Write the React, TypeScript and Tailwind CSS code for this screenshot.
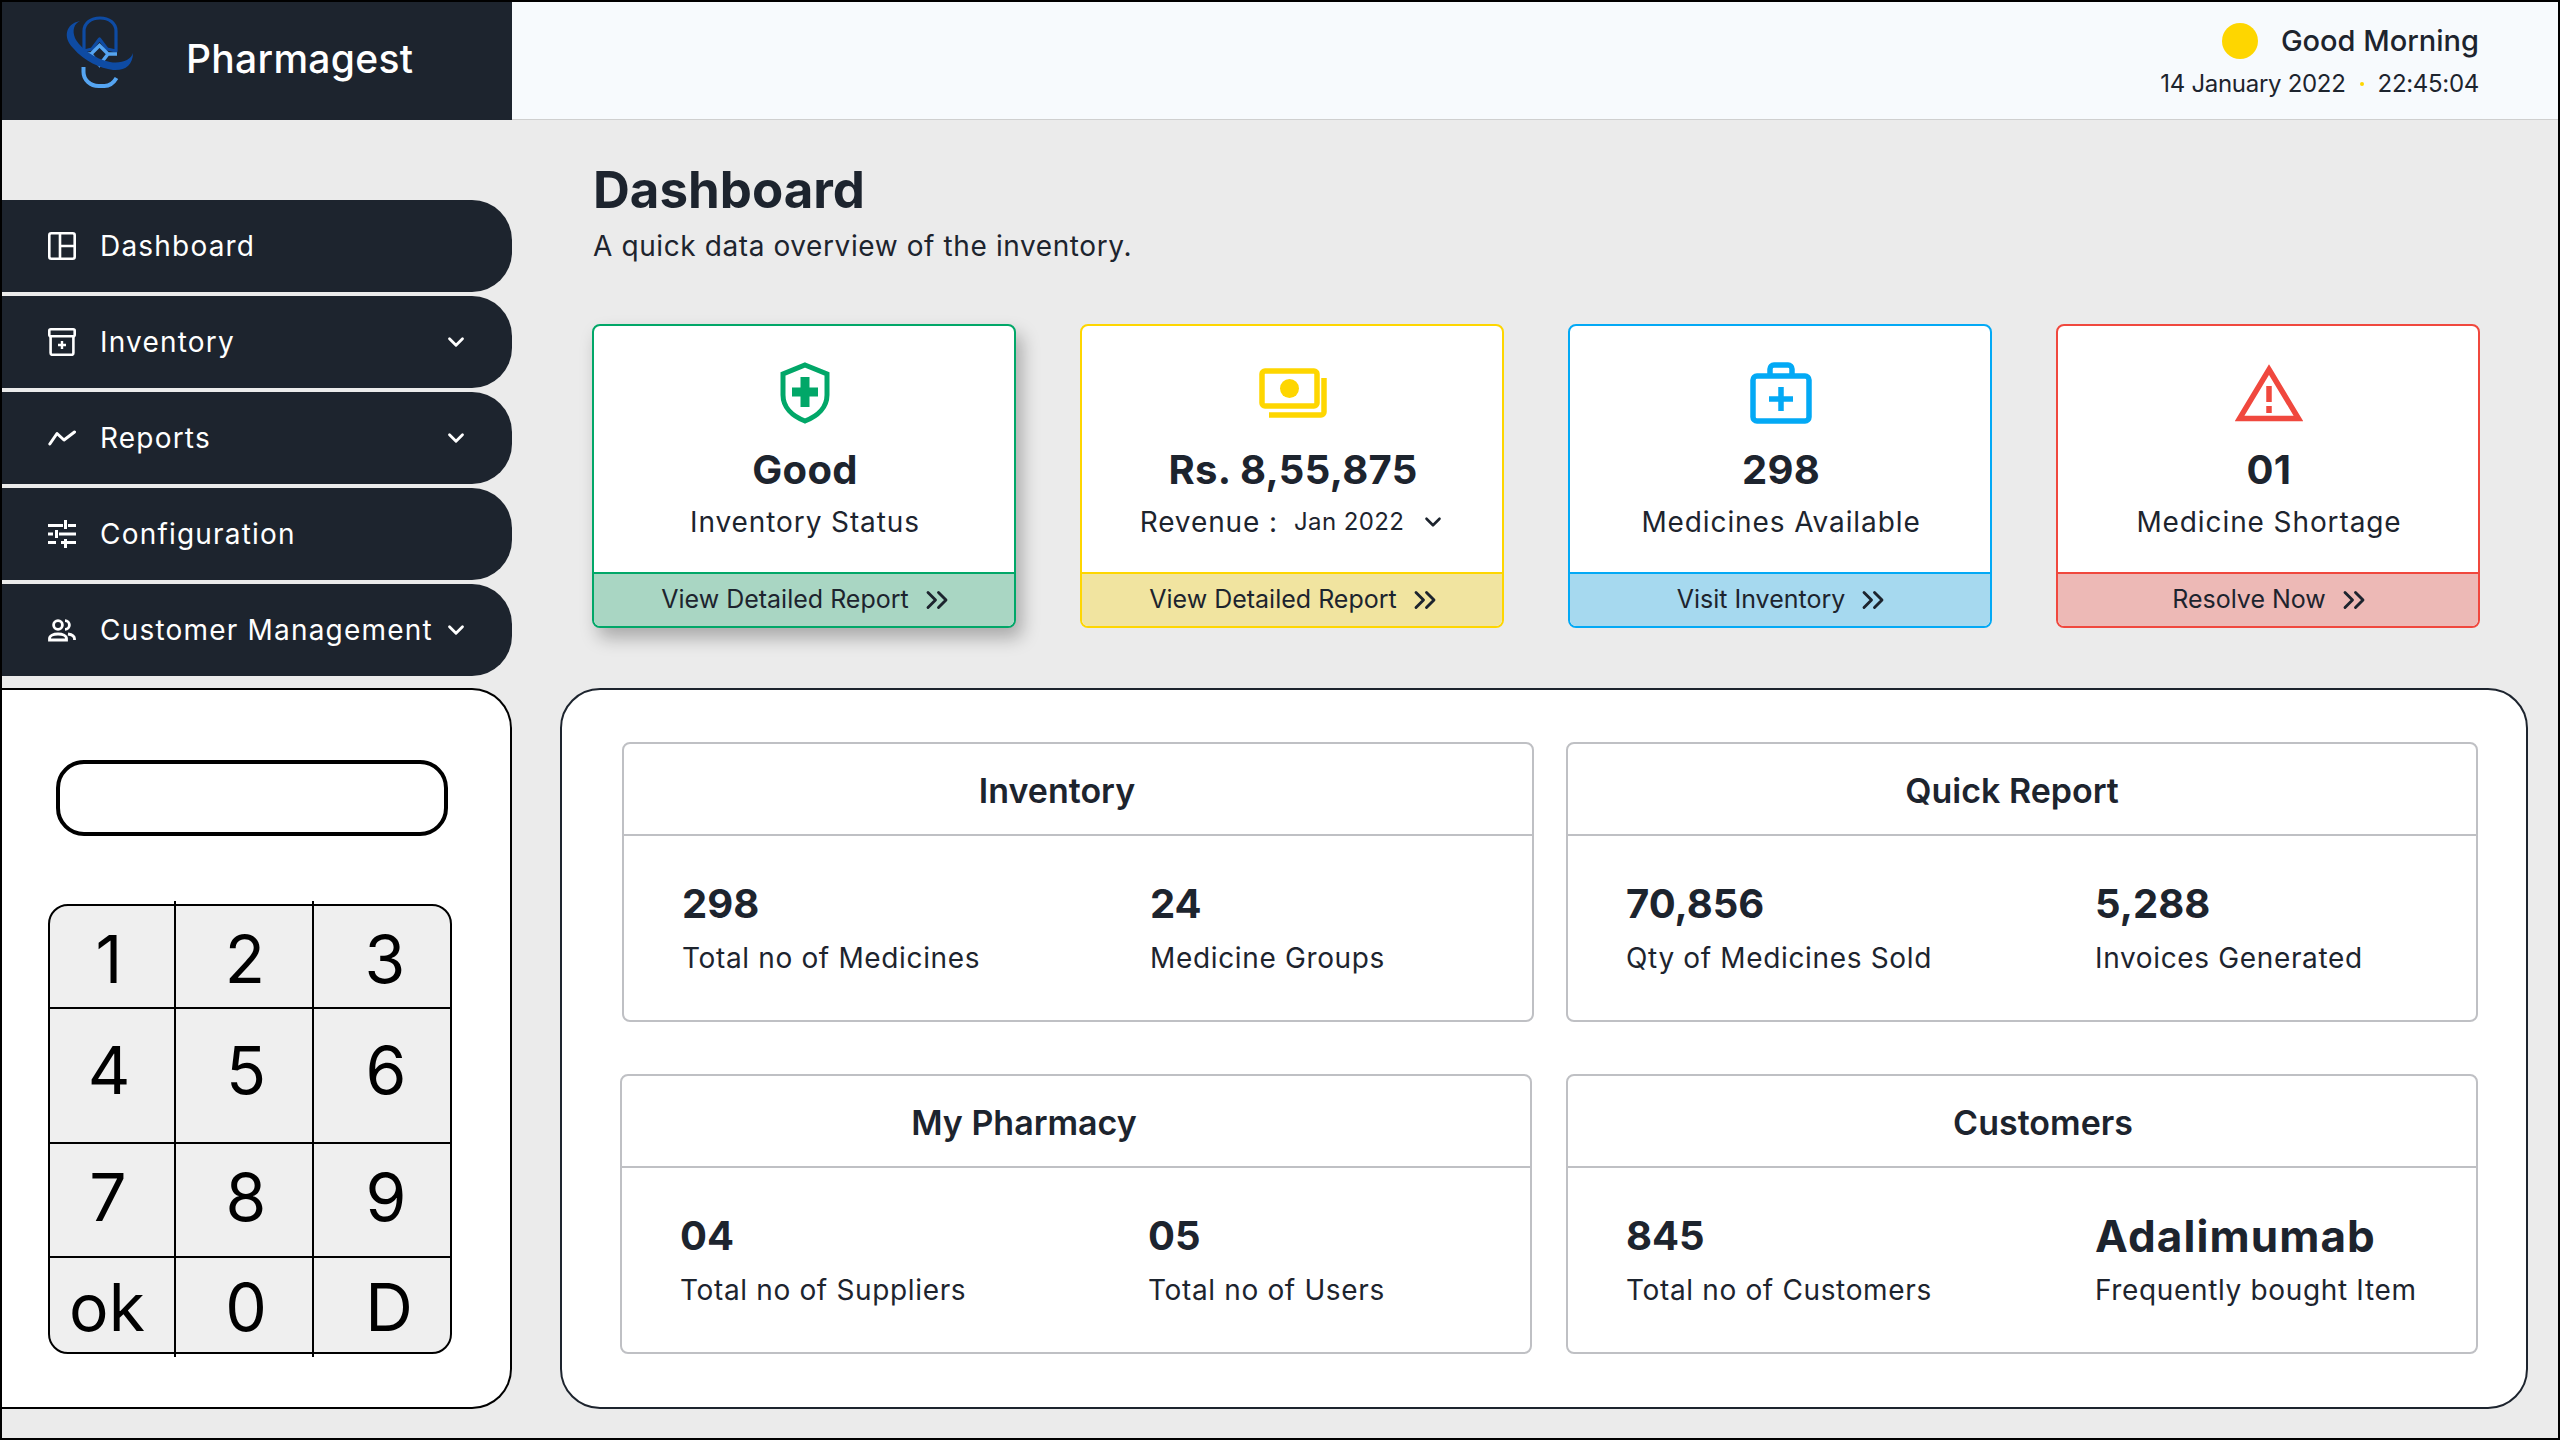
import React from 'react';
import { ChevronDown, ChevronsRight } from 'lucide-react';

const DashIcon = () => (
  <svg width="28" height="28" viewBox="0 0 28 28" fill="none" stroke="white" strokeWidth="2.6">
    <rect x="1.3" y="1.3" width="25.4" height="25.4" rx="2" />
    <path d="M12 1v26M12 14h15" />
  </svg>
);

const BoxIcon = () => (
  <svg width="28" height="28" viewBox="0 0 28 28" fill="none" stroke="white" strokeWidth="2.6">
    <rect x="1.3" y="1.3" width="25.4" height="7" rx="1.5" />
    <path d="M2.6 8v17a1.8 1.8 0 0 0 1.8 1.800h19.200a1.800 1.800 0 0 0 1.800-1.800V8" />
    <path d="M14 13v8M10 17h8" strokeWidth="2.4" />
  </svg>
);

const TrendIcon = () => (
  <svg width="28" height="28" viewBox="0 0 28 28" fill="none" stroke="white" strokeWidth="3" strokeLinecap="round" strokeLinejoin="round">
    <path d="M1.800 20 9 9.500l7 6.500L26.500 8" />
  </svg>
);

const TuneIcon = () => (
  <svg width="28" height="28" viewBox="0 0 28 28" fill="none" stroke="white" strokeWidth="3">
    <path d="M0 5.500h15M20 5.500h8M17.500 0v9" />
    <path d="M0 14h5M11 14h17M8.500 10v8" />
    <path d="M0 22.500h8M13 22.500h15M17.500 19v9" />
  </svg>
);

const PeopleIcon = () => (
  <svg width="28" height="28" viewBox="0 0 28 28" fill="none" stroke="white" strokeWidth="2.800">
    <circle cx="10" cy="9" r="4.400" />
    <path d="M1.500 24v-1.500c0-2.800 3.800-4.500 8.500-4.500s8.500 1.700 8.500 4.500V24z" />
    <path d="M17 4.600a4.400 4.400 0 0 1 0 8.800M20 18c3.600.6 6.500 2.200 6.500 4.700V24" />
  </svg>
);

const ShieldIcon = () => (
  <svg width="50" height="62" viewBox="0 0 50 62" fill="none">
    <path d="M25 3 47 12v21c0 12-9 21-22 26C12 54 3 45 3 33V12z" stroke="#01a768" strokeWidth="5" />
    <path d="M20.500 15h9v10.500H38v9h-8.500V45h-9V34.500H12v-9h8.500z" fill="#01a768" />
  </svg>
);

const MoneyIcon = () => (
  <svg width="68" height="50" viewBox="0 0 68 50" fill="none">
    <rect x="3" y="3" width="55" height="35" rx="3" stroke="#fed600" strokeWidth="5.500" />
    <circle cx="30.500" cy="20.500" r="9.500" fill="#fed600" />
    <path d="M65 10v34a3 3 0 0 1-3 3H10" stroke="#fed600" strokeWidth="5.500" />
  </svg>
);

const BagIcon = () => (
  <svg width="62" height="62" viewBox="0 0 62 62" fill="none">
    <path d="M20 13V7a4 4 0 0 1 4-4h14a4 4 0 0 1 4 4v6" stroke="#03a9f5" strokeWidth="5.500" />
    <rect x="3" y="14" width="56" height="45" rx="4" stroke="#03a9f5" strokeWidth="5.500" />
    <path d="M31 25v24M19 37h24" stroke="#03a9f5" strokeWidth="5.500" />
  </svg>
);

const WarnIcon = () => (
  <svg width="68" height="58" viewBox="0 0 68 58" fill="none">
    <path d="M34 5.500 63.500 54.500h-59z" stroke="#f0483e" strokeWidth="5.500" />
    <path d="M34 22v16M34 42v7" stroke="#f0483e" strokeWidth="5.500" />
  </svg>
);

const Logo = () => (
  <svg width="90" height="85" viewBox="0 0 90 85" fill="none" className="mb-[17px]">
    <path d="M29 41V21C29 13 36 8 45 8s16 5 16 13v20l-9-2-7.500-10L37 39z" stroke="#0e4ba3" strokeWidth="3.200" strokeLinejoin="round" />
    <path d="M27.500 44H36l8.500-8.500L53 44h9M36 44l8.500 11L53 44" stroke="#55a5f2" strokeWidth="3.400" />
    <path d="M28.500 57v5c0 8 7 14 15 14h6c5 0 9-3 12-8" stroke="#55a5f2" strokeWidth="4" />
    <path d="M25 11C10 14 8 28 18 38c12 14 27 20 40 22 12 1 20-5 20-17-2 7-12 11-23 9-15-3-30-14-35-24-3-8-1-14 5-17z" fill="#0e4ba3" />
  </svg>
);

const navItems = [
  { label: 'Dashboard', icon: <DashIcon /> },
  { label: 'Inventory', icon: <BoxIcon />, caret: true },
  { label: 'Reports', icon: <TrendIcon />, caret: true },
  { label: 'Configuration', icon: <TuneIcon /> },
  { label: 'Customer Management', icon: <PeopleIcon />, caret: true },
];

const statCards = [
  { icon: <ShieldIcon />, value: 'Good', label: 'Inventory Status', link: 'View Detailed Report', box: 'border-[#01a768]', foot: 'bg-[#a9d6c3]', extra: 'shadow-[6px_10px_18px_rgba(0,0,0,0.28)]' },
  { icon: <MoneyIcon />, value: 'Rs. 8,55,875', label: 'Revenue :', month: 'Jan 2022', link: 'View Detailed Report', box: 'border-[#fed600]', foot: 'bg-[#f1e4a0]', extra: '' },
  { icon: <BagIcon />, value: '298', label: 'Medicines Available', link: 'Visit Inventory', box: 'border-[#03a9f5]', foot: 'bg-[#a6d9ef]', extra: '' },
  { icon: <WarnIcon />, value: '01', label: 'Medicine Shortage', link: 'Resolve Now', box: 'border-[#f0483e]', foot: 'bg-[#edb9b6]', extra: '' },
];

// each key carries its own nudge, the digits in the picture are not quite centred
const keys = [
  { k: '1', cls: 'pr-[6px] pt-[6px]' },
  { k: '2', cls: 'pl-[2px] pt-[6px]' },
  { k: '3', cls: 'pl-[6px] pt-[6px]' },
  { k: '4', cls: 'pr-[6px] pb-[10px]' },
  { k: '5', cls: 'pl-[4px] pb-[10px]' },
  { k: '6', cls: 'pl-[8px] pb-[10px]' },
  { k: '7', cls: 'pr-[8px] pb-[6px]' },
  { k: '8', cls: 'pl-[4px] pb-[6px]' },
  { k: '9', cls: 'pl-[8px] pb-[6px]' },
  { k: 'ok', cls: 'pr-[10px]' },
  { k: '0', cls: 'pl-[4px]' },
  { k: 'D', cls: 'pl-[14px]' },
];

function InfoBox({ title, titleClass, boxClass, left, right, bodyClass }: {
  title: string;
  titleClass: string;
  boxClass?: string;
  left: string[];
  right: string[];
  bodyClass: string;
}) {
  return (
    <div className={`h-[280px] rounded-lg border-2 border-[#bfc0c4] flex flex-col ${boxClass ?? ''}`}>
      <div className={`h-[92px] shrink-0 border-b-2 border-[#bfc0c4] flex items-center justify-center text-[34px] font-semibold ${titleClass}`}>
        {title}
      </div>
      <div className={`flex-1 grid pt-[43px] ${bodyClass}`}>
        {[left, right].map((col) => (
          <div key={col[1]}>
            <div className={`leading-[50px] font-bold ${col[0] === 'Adalimumab' ? 'text-[44px] tracking-[1.1px]' : 'text-[40px]'}`}>{col[0]}</div>
            <div className="text-[28px] leading-[40px] mt-[9px] tracking-[0.65px]">{col[1]}</div>
          </div>
        ))}
      </div>
    </div>
  );
}

export default function App() {
  return (
    <div className="w-[2560px] h-[1440px] border-2 border-black bg-[#ebebeb] text-[#1d242e] flex flex-col overflow-hidden [font-family:Inter,sans-serif]">
      <header className="h-[118px] shrink-0 flex bg-[#f7fafd] border-b border-[#cfcfcf]">
        <div className="w-[510px] h-[118px] bg-[#1d242e] flex items-center pl-[53px]">
          <Logo />
          <span className="ml-[41px] mb-[3px] text-white text-[39px] font-medium tracking-[0.3px]">Pharmagest</span>
        </div>
        <div className="flex-1 flex flex-col items-end justify-center pr-[79px]">
          <div className="flex items-center">
            <span className="w-9 h-9 rounded-full bg-[#fed600] mr-[23px]" />
            <span className="text-[29px] font-medium">Good Morning</span>
          </div>
          <div className="flex items-center text-[24px] mt-[4px] tracking-[-0.3px]">
            <span>14 January 2022</span>
            <span className="w-[4px] h-[4px] rounded-full bg-[#fed600] mx-[14px]" />
            <span>22:45:04</span>
          </div>
        </div>
      </header>

      <div className="flex-1 flex">
        <aside className="w-[510px] shrink-0 pt-[80px] flex flex-col">
          <nav className="flex flex-col gap-1">
            {navItems.map((item) => (
              <div key={item.label} className="h-[92px] bg-[#1d242e] rounded-r-[40px] text-white flex items-center pl-[46px] pr-[43px]">
                {item.icon}
                <span className="ml-6 text-[28px] flex-1 whitespace-nowrap tracking-[1.2px]">{item.label}</span>
                {item.caret && <ChevronDown size={26} strokeWidth={2.6} />}
              </div>
            ))}
          </nav>
          <div className="mt-3 h-[721px] bg-white border-y-2 border-r-2 border-black rounded-r-[40px] pl-[46px] pt-[70px]">
            <div className="w-[392px] h-[76px] ml-[8px] border-4 border-black rounded-[28px]" />
            <div className="relative mt-[68px] w-[404px] h-[450px] rounded-[20px] border-2 border-black bg-[#efefef] grid grid-cols-[126px_138px_1fr] grid-rows-[103px_135px_114px_1fr] text-black text-[66px]">
              <span className="absolute top-[-5px] left-[124px] w-[2px] h-[4px] bg-black" />
              <span className="absolute top-[-5px] left-[262px] w-[2px] h-[4px] bg-black" />
              {keys.map(({ k, cls }, i) => (
                <div
                  key={k}
                  className={`flex items-center justify-center ${cls} ${i % 3 !== 2 ? 'border-r-2 border-black' : ''} ${i < 9 ? 'border-b-2 border-black' : ''}`}
                >
                  {k}
                </div>
              ))}
            </div>
          </div>
        </aside>

        <main className="flex-1 min-w-0 pl-[48px] flex flex-col">
          <div className="pl-[33px] pt-[38px]">
            <h1 className="text-[51px] leading-[64px] font-bold">Dashboard</h1>
            <p className="text-[28px] leading-[40px] mt-[4px] tracking-[0.6px]">A quick data overview of the inventory.</p>
          </div>

          <div className="ml-[32px] mt-[58px] w-[1888px] grid grid-cols-4 gap-x-[64px]">
            {statCards.map((c) => (
              <div key={c.value} className={`h-[304px] rounded-lg border-2 bg-white overflow-hidden flex flex-col ${c.box} ${c.extra}`}>
                <div className="flex-1 flex flex-col items-center pt-[36px] pl-[2px]">
                  <div className="h-[62px] flex items-center">{c.icon}</div>
                  <div className="mt-[21px] text-[40px] leading-[50px] font-bold tracking-[0.3px]">{c.value}</div>
                  <div className="mt-[7px] text-[28px] leading-[40px] flex items-center tracking-[0.9px]">
                    {c.label}
                    {c.month && (
                      <>
                        <span className="text-[24px] ml-[16px] tracking-[0.4px]">{c.month}</span>
                        <ChevronDown size={26} strokeWidth={2.4} className="ml-[16px]" />
                      </>
                    )}
                  </div>
                </div>
                <div className={`h-[54px] shrink-0 border-t-2 flex items-center justify-center text-[25px] ${c.box} ${c.foot}`}>
                  {c.link}
                  <ChevronsRight size={36} strokeWidth={1.9} className="ml-[10px] mr-[-8px]" />
                </div>
              </div>
            ))}
          </div>

          <div className="mt-[60px] w-[1968px] h-[721px] bg-white border-2 border-[#1d242e] rounded-[40px] pl-[60px] pt-[52px] pr-[48px]">
            <div className="grid grid-cols-[912px_912px] gap-x-[32px] gap-y-[52px]">
              <InfoBox title="Inventory" titleClass="pr-[42px] pt-[3px]" left={['298', 'Total no of Medicines']} right={['24', 'Medicine Groups']} bodyClass="grid-cols-[468px_1fr] pl-[58px]" />
              <InfoBox title="Quick Report" titleClass="pr-[20px] pt-[3px]" left={['70,856', 'Qty of Medicines Sold']} right={['5,288', 'Invoices Generated']} bodyClass="grid-cols-[469px_1fr] pl-[58px]" />
              <InfoBox title="My Pharmacy" titleClass="pr-[104px] pt-[3px]" boxClass="ml-[-2px] mr-[2px]" left={['04', 'Total no of Suppliers']} right={['05', 'Total no of Users']} bodyClass="grid-cols-[468px_1fr] pl-[58px]" />
              <InfoBox title="Customers" titleClass="pl-[42px] pt-[3px]" left={['845', 'Total no of Customers']} right={['Adalimumab', 'Frequently bought Item']} bodyClass="grid-cols-[469px_1fr] pl-[58px]" />
            </div>
          </div>
        </main>
      </div>
    </div>
  );
}
